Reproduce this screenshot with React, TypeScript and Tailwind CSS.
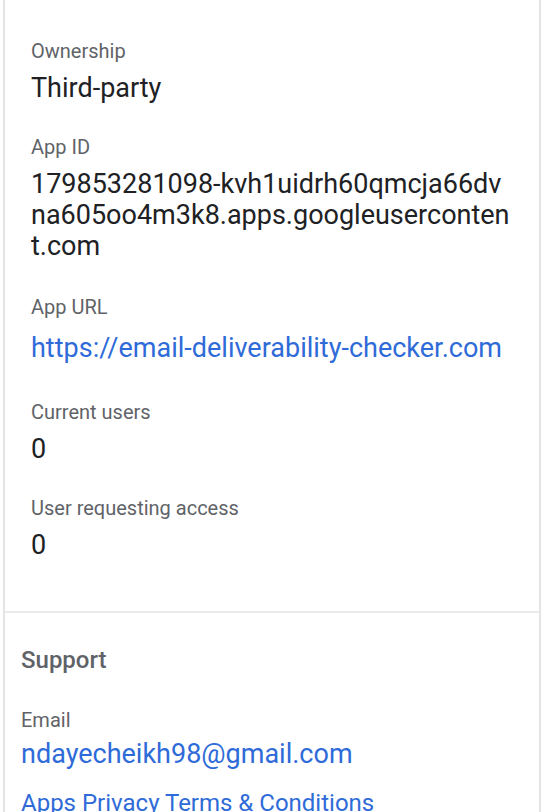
const details = [
  { label: 'Ownership', value: 'Third-party' },
  { label: 'App ID', value: '179853281098-kvh1uidrh60qmcja66dvna605oo4m3k8.apps.googleusercontent.com', extra: 'mb-[2px]' },
  { label: 'App URL', value: 'https://email-deliverability-checker.com', link: true },
  { label: 'Current users', value: '0' },
  { label: 'User requesting access', value: '0' },
];

export default function App() {
  return (
    <div className="h-[812px] overflow-hidden bg-white font-['Roboto',sans-serif]">
      <div className="ml-[3px] w-[538px] h-full border-x-2 border-[#e3e4e6]">
        {/* ── App details ─────────────────────────────────────────── */}
        <div className="pl-[26px] pr-[28px] pt-[39px] pb-[50px] flex flex-col gap-[31px]">
          {details.map((d) => (
            <div key={d.label}>
              <div className="text-[20px] leading-[24px] text-[#5f6368]">{d.label}</div>
              {d.link ? (
                <a className="block mt-[14px] mb-[5px] text-[27px] leading-[31px] text-[#2f6bd8] break-all">{d.value}</a>
              ) : (
                <div className={`mt-[10px] text-[27px] leading-[31px] text-[#202124] break-all ${d.extra ?? ''}`}>{d.value}</div>
              )}
            </div>
          ))}
        </div>

        <div className="border-t-2 border-[#ebebeb]" />

        {/* ── Support ────────────────────────────────────────────── */}
        <div className="px-[16px] pt-[35px]">
          <div className="text-[24px] leading-[24px] font-medium text-[#5f6368]">Support</div>
          <div className="mt-[36px] text-[20px] leading-[24px] text-[#5f6368]">Email</div>
          <a className="block mt-[7px] text-[27px] leading-[31px] text-[#2f6bd8]">ndayecheikh98@gmail.com</a>
          <a className="block mt-[18px] text-[24px] leading-[31px] text-[#2f6bd8]">Apps Privacy Terms &amp; Conditions</a>
        </div>
      </div>
    </div>
  );
}
